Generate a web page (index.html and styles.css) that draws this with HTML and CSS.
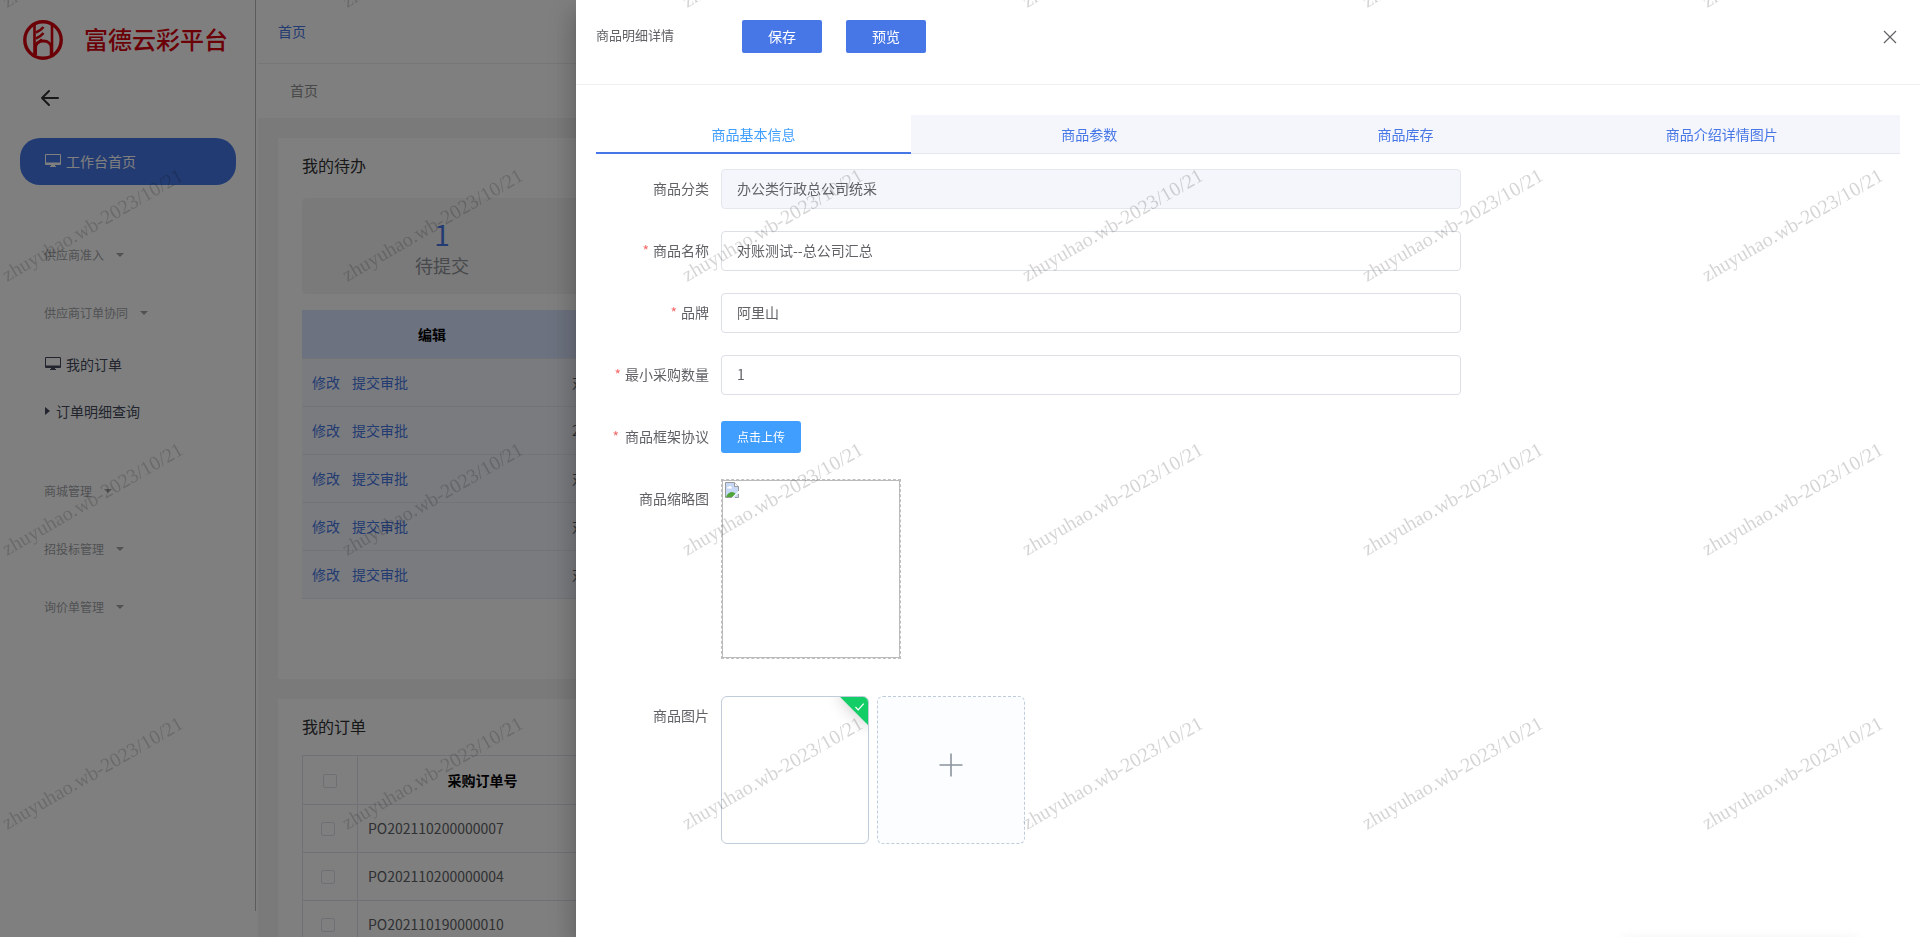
FILE: index.html
```html
<!DOCTYPE html>
<html lang="zh-CN">
<head>
<meta charset="utf-8">
<title>富德云彩平台</title>
<meta name="viewport" content="width=device-width, initial-scale=1">
<link rel="stylesheet" href="styles.css">
</head>
<body>
<div class="app">
  <aside class="sidebar">
    <div class="brand">
      <svg class="brand-mark" viewBox="0 0 40 40" fill="none" stroke="currentColor" aria-hidden="true">
        <circle cx="20" cy="20" r="18.2" stroke-width="3.4"/>
        <path d="M11.500 5v30M29 5v30" stroke-width="2.600"/>
        <path d="M13 12.500c3-1 5-2.500 7.500-5.500M13 18.500c3-1 5-2.500 7.500-5.500M13 23.500c3-1 4-2 6-4" stroke-width="2.600"/>
        <path d="M12.500 35.500V28c0-4 3-7 7.800-7s8 3 8 7v7.500" stroke-width="3"/>
      </svg>
      <span class="brand-name">富德云彩平台</span>
    </div>
    <button class="back" type="button" aria-label="返回">
      <svg width="20" height="18" viewBox="0 0 20 18" fill="none" stroke="currentColor" stroke-width="2" stroke-linecap="round" stroke-linejoin="round"><path d="M9 2L2 9l7 7M2 9h16"/></svg>
    </button>
    <nav class="menu">
      <a class="menu-home" href="#">
        <svg class="screen" width="16" height="14" viewBox="0 0 16 14" fill="currentColor" aria-hidden="true"><path fill-rule="evenodd" d="M1 0h14a1 1 0 0 1 1 1v9a1 1 0 0 1-1 1h-5v1h1v1H5v-1h1v-1H1a1 1 0 0 1-1-1V1a1 1 0 0 1 1-1zm0 1v7.500h14V1z"/></svg>
        工作台首页</a>
      <button class="group" type="button">供应商准入<i class="caret"></i></button>
      <button class="group" type="button">供应商订单协同<i class="caret"></i></button>
      <div class="submenu">
        <a class="item" href="#">
          <svg class="screen" width="16" height="14" viewBox="0 0 16 14" fill="currentColor" aria-hidden="true"><path fill-rule="evenodd" d="M1 0h14a1 1 0 0 1 1 1v9a1 1 0 0 1-1 1h-5v1h1v1H5v-1h1v-1H1a1 1 0 0 1-1-1V1a1 1 0 0 1 1-1zm0 1v7.500h14V1z"/></svg>
          我的订单</a>
        <a class="item" href="#"><i class="caret-right"></i>订单明细查询</a>
      </div>
      <button class="group" type="button">商城管理<i class="caret"></i></button>
      <button class="group" type="button">招投标管理<i class="caret"></i></button>
      <button class="group" type="button">询价单管理<i class="caret"></i></button>
    </nav>
  </aside>
  <main class="main">
    <header class="topbar"><a href="#">首页</a></header>
    <div class="crumb">首页</div>
    <div class="content">
      <section class="card todo">
        <h2>我的待办</h2>
        <div class="stats">
          <div class="stat"><strong>1</strong><span>待提交</span></div>
          <div class="stat"></div>
        </div>
        <table class="todo-table">
          <thead><tr><th class="col-edit">编辑</th><th></th></tr></thead>
          <tbody>
            <tr><td><a href="#">修改</a><a href="#">提交审批</a></td><td>对账测试</td></tr>
            <tr><td><a href="#">修改</a><a href="#">提交审批</a></td><td>2</td></tr>
            <tr><td><a href="#">修改</a><a href="#">提交审批</a></td><td>对账测试</td></tr>
            <tr><td><a href="#">修改</a><a href="#">提交审批</a></td><td>对账测试</td></tr>
            <tr><td><a href="#">修改</a><a href="#">提交审批</a></td><td>对账测试</td></tr>
          </tbody>
        </table>
      </section>
      <section class="card orders">
        <h2>我的订单</h2>
        <table class="order-table">
          <thead><tr><th class="col-check"><input type="checkbox" aria-label="全选"></th><th class="col-no">采购订单号</th><th></th></tr></thead>
          <tbody>
            <tr><td class="pick"><input type="checkbox" aria-label="PO202110200000007"></td><td>PO202110200000007</td><td></td></tr>
            <tr><td class="pick"><input type="checkbox" aria-label="PO202110200000004"></td><td>PO202110200000004</td><td></td></tr>
            <tr><td class="pick"><input type="checkbox" aria-label="PO202110190000010"></td><td>PO202110190000010</td><td></td></tr>
          </tbody>
        </table>
      </section>
    </div>
  </main>
</div>

<div class="mask"></div>

<section class="drawer" role="dialog" aria-labelledby="drawer-title">
  <header class="drawer-head">
    <span class="drawer-title" id="drawer-title">商品明细详情</span>
    <div class="drawer-actions">
      <button class="btn" type="button">保存</button>
      <button class="btn" type="button">预览</button>
    </div>
    <button class="close" type="button" aria-label="关闭">
      <svg width="14" height="14" viewBox="0 0 14 14" fill="none" stroke="currentColor" stroke-width="1.200"><path d="M1 1l12 12M13 1L1 13"/></svg>
    </button>
  </header>
  <div class="drawer-body">
    <div class="tabs" role="tablist">
      <button class="tab active" type="button" role="tab" aria-selected="true">商品基本信息</button>
      <div class="tabs-rest">
        <button class="tab" type="button" role="tab">商品参数</button>
        <button class="tab" type="button" role="tab">商品库存</button>
        <button class="tab" type="button" role="tab">商品介绍详情图片</button>
      </div>
    </div>
    <form class="form">
      <div class="row"><label for="category">商品分类</label><input class="field" id="category" type="text" value="办公类行政总公司统采" disabled></div>
      <div class="row"><label class="required" for="name">商品名称</label><input class="field" id="name" type="text" value="对账测试--总公司汇总"></div>
      <div class="row"><label class="required" for="brand">品牌</label><input class="field" id="brand" type="text" value="阿里山"></div>
      <div class="row"><label class="required" for="minimum">最小采购数量</label><input class="field" id="minimum" type="text" value="1"></div>
      <div class="row"><label class="required wide" for="upload">商品框架协议</label><button class="upload" id="upload" type="button">点击上传</button></div>
      <div class="row row-thumb">
        <span class="label">商品缩略图</span>
        <div class="thumb"><div class="thumb-inner">
          <svg width="16" height="16" viewBox="0 0 16 16" role="img" aria-label="商品缩略图">
            <path d="M1.500.5h9l4 4v11h-13z" fill="#c6d8f5"/>
            <path d="M3 6c0-1 1-1.500 1.700-1.200C5.200 3.500 7 3.800 7.200 5c1 0 1.200 1.500.2 1.500H3.500z" fill="#fff"/>
            <path d="M2 15c1-3 3.500-5 6-5 1.500 0 3 1 3.500 2l-3 3z" fill="#4fa53a"/>
            <path d="M9 15.500l6-5v-2l-7 7z" fill="#fff"/>
            <path d="M8 15.500H1.500v-15h9l4 4v4.500M14.500 12v3.500H11" fill="none" stroke="#9a9a9a"/>
            <path d="M10.500.5v4h4" fill="#fff" stroke="#9a9a9a"/>
          </svg>
        </div></div>
      </div>
      <div class="row">
        <span class="label">商品图片</span>
        <div class="pictures">
          <div class="picture"><span class="done"><svg width="12" height="12" viewBox="0 0 12 12" fill="none" stroke="#fff" stroke-width="1.200"><path d="M2 6.500l2.700 2.800L10.300 3"/></svg></span></div>
          <button class="add" type="button" aria-label="添加图片"><svg width="24" height="24" viewBox="0 0 24 24" fill="none" stroke="currentColor" stroke-width="1.600"><path d="M12 .5v23M.5 12h23"/></svg></button>
        </div>
      </div>
    </form>
  </div>
</section>

<div class="toast-edge"></div>

<svg class="watermark" aria-hidden="true">
  <defs>
    <pattern id="mark" y="20" width="340" height="274" patternUnits="userSpaceOnUse">
      <text class="watermark-text" transform="translate(7 262) rotate(-30)">zhuyuhao.wb-2023/10/21</text>
    </pattern>
  </defs>
  <rect width="100%" height="100%" fill="url(#mark)"/>
</svg>
</body>
</html>
```
FILE: styles.css
```css
* { box-sizing: border-box; }

body {
  margin: 0;
  height: 100vh;
  overflow: hidden;
  font: 14px/20px "Noto Sans CJK SC", sans-serif;
  color: #606266;
  background: #fff;
}

a { color: #4777e6; text-decoration: none; }
button, input { font: inherit; margin: 0; }
button { padding: 0; border: 0; background: none; cursor: pointer; }
h2 { margin: 0; font-size: 16px; line-height: 24px; font-weight: 400; color: #303133; }
table { width: 100%; border-collapse: separate; border-spacing: 0; table-layout: fixed; }

.app { display: flex; height: 100vh; overflow: hidden; }

/* Sidebar */
.sidebar { flex: 0 0 258px; position: relative; padding: 20px 22px 0 20px; }
.sidebar::after {
  content: "";
  position: absolute;
  top: 0;
  right: 2px;
  bottom: 26px;
  width: 1px;
  background: #b8b8b8;
}
.brand { display: flex; align-items: flex-start; gap: 21px; padding-left: 3px; height: 40px; color: #d7000f; }
.brand-mark { width: 40px; height: 40px; }
.brand-name { font-size: 24px; line-height: 38px; font-weight: 500; white-space: nowrap; }
.back { display: flex; margin: 29px 0 31px 20px; color: #303133; }
.menu { display: flex; flex-direction: column; }
.menu-home {
  display: flex;
  align-items: center;
  gap: 5px;
  height: 47px;
  margin-bottom: 41px;
  padding: 0 0 2px 25px;
  border-radius: 20px;
  background: #4777e6;
  color: #fff;
}
.group {
  display: flex;
  align-items: center;
  gap: 12px;
  height: 58px;
  padding-left: 24px;
  font-size: 12px;
  color: #a2a4a8;
}
.caret { border: 4px solid transparent; border-top-color: currentColor; border-bottom: 0; }
.caret-right { border: 4px solid transparent; border-left: 5px solid currentColor; border-right: 0; margin-right: 1px; }
.submenu { padding-bottom: 26px; }
.item { display: flex; align-items: center; gap: 5px; height: 47px; padding: 0 0 4px 25px; color: #444b5c; }

/* Page behind the drawer */
.main { flex: 1; min-width: 0; }
.topbar { padding: 21px 20px 22px; border-bottom: 1px solid #eee; }
.crumb { padding: 16px 32px 18px; color: #909090; }
.content { display: grid; gap: 20px; padding: 20px; background: #f4f4f4; }
.card { padding: 15px 24px; background: #fff; }
.todo { padding-bottom: 80px; }
.stats { display: flex; margin: 21px 0 16px; background: #f4f4f4; border-radius: 4px; }
.stat {
  display: flex;
  flex-direction: column;
  align-items: center;
  width: 280px;
  padding: 19px 0 15px;
}
.stat strong { font-size: 28px; line-height: 34px; font-weight: 400; color: #4777e6; }
.stat span { font-size: 18px; line-height: 28px; color: #909399; }
th { color: #000; font-weight: 700; text-align: center; }
th, td { height: 48px; padding: 0 10px; border-bottom: 1px solid #e6e9f2; }
td { padding-bottom: 2px; }
.todo-table th { height: 49px; background: #d9e4ff; }
.todo-table td { background: #f4f6fe; white-space: nowrap; }
.todo-table td a + a { margin-left: 12px; }
.col-edit { width: 260px; }
.order-table { margin-top: 17px; border-top: 1px solid #e0e2ec; border-left: 1px solid #e0e2ec; }
.order-table th, .order-table td { border-right: 1px solid #e0e2ec; border-bottom-color: #e0e2ec; }
.order-table th { height: 49px; }
.col-check { width: 55px; }
.col-no { width: 250px; }
.order-table input {
  appearance: none;
  display: block;
  width: 14px;
  height: 14px;
  margin: 2px auto 0;
  border: 1px solid #dcdfe6;
  border-radius: 2px;
  background: #fff;
}
.order-table .pick input { margin-left: 8px; }

.mask { position: fixed; inset: 0; background: rgba(0, 0, 0, .5); }

/* Drawer */
.drawer {
  position: fixed;
  top: 0;
  right: 0;
  bottom: 0;
  width: 70%;
  background: #fff;
  box-shadow: 0 8px 10px -5px rgba(0, 0, 0, .2), 0 16px 24px 2px rgba(0, 0, 0, .14), 0 6px 30px 5px rgba(0, 0, 0, .12);
}
.drawer-head { display: flex; align-items: flex-start; padding: 20px 23px 31px 20px; border-bottom: 1px solid #efefef; }
.drawer-title { width: 146px; padding-top: 5px; font-size: 13px; color: #606266; }
.drawer-actions { display: flex; flex: 1; gap: 24px; }
.btn { width: 80px; height: 33px; padding-bottom: 2px; border-radius: 2px; background: #4777e6; color: #fff; }
.close { display: flex; margin-top: 10px; color: #606266; }
.drawer-body { padding: 30px 20px; }

.tabs { display: flex; height: 39px; }
.tab { flex: 1; color: #4777e6; }
.tab.active { flex: 0 0 315px; border-bottom: 2px solid #4777e6; color: #409eff; }
.tabs-rest { display: flex; flex: 1; padding: 0 20px; border-bottom: 1px solid #e4e7ed; background: #f5f6fb; }

.form { display: flex; flex-direction: column; gap: 22px; width: 66.3%; padding-top: 15px; }
.row { display: flex; align-items: flex-start; min-height: 40px; }
.row label, .label { flex: 0 0 125px; padding-right: 12px; line-height: 38px; text-align: right; }
.required::before { content: "*"; margin-right: 4px; color: #f56c6c; }
.required.wide::before { margin-right: 6px; }
.field {
  flex: 1;
  min-width: 0;
  height: 40px;
  padding: 0 15px 2px;
  border: 1px solid #dcdfe6;
  border-radius: 4px;
  background: #fff;
  color: #606266;
}
.field:disabled { border-color: #e4e7ed; background: #f5f6fb; }
.upload { width: 80px; height: 32px; margin-top: 4px; border-radius: 3px; background: #409eff; color: #fff; font-size: 12px; }
.row-thumb { margin-bottom: 15px; }
.thumb { width: 180px; height: 180px; border: 1px dashed #c0c0c0; }
.thumb-inner { height: 100%; padding: 1px; border: 1px solid #bbb; }
.pictures { display: flex; gap: 8px; }
.picture, .add { position: relative; width: 148px; height: 148px; border: 1px solid #c0ccda; border-radius: 6px; overflow: hidden; }
.add { display: grid; place-items: center; padding-bottom: 10px; border-style: dashed; background: #fbfdff; color: #8c939d; }
.done {
  position: absolute;
  top: -6px;
  right: -15px;
  display: flex;
  justify-content: center;
  width: 40px;
  height: 24px;
  padding-top: 11px;
  background: #13ce66;
  box-shadow: 0 0 16px 1px rgba(0, 0, 0, .2);
  transform: rotate(45deg);
}
.done svg { transform: rotate(-45deg); }

/* Notification waiting below the viewport; only its shadow shows */
.toast-edge {
  position: fixed;
  top: 100%;
  right: 64px;
  width: 232px;
  height: 40px;
  box-shadow: 0 4px 12px rgba(0, 0, 0, .1);
}

.watermark { position: fixed; inset: 0; width: 100%; height: 100%; pointer-events: none; }
.watermark-text { font: 20px "Liberation Serif", serif; fill: rgba(0, 0, 0, .17); }
```
